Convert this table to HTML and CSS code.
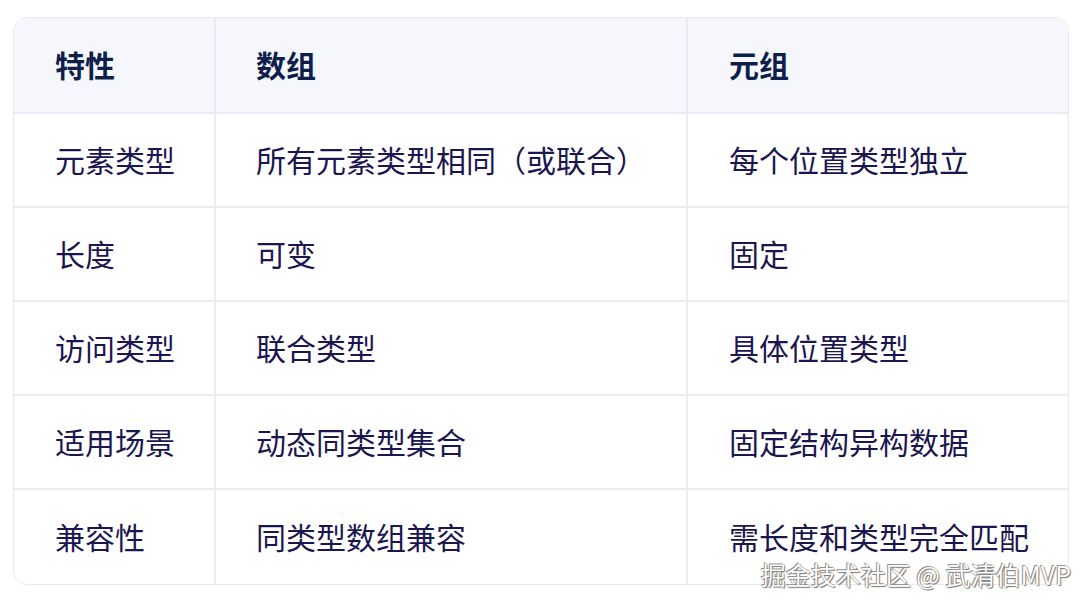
FILE: index.html
```html
<!DOCTYPE html>
<html lang="zh">
<head>
<meta charset="utf-8">
<link rel="stylesheet" href="styles.css">
</head>
<body>
<div class="wrap">
  <div class="table">
    <div class="cell head">特性</div>
    <div class="cell head">数组</div>
    <div class="cell head last">元组</div>

    <div class="cell">元素类型</div>
    <div class="cell">所有元素类型相同（或联合）</div>
    <div class="cell last">每个位置类型独立</div>

    <div class="cell">长度</div>
    <div class="cell">可变</div>
    <div class="cell last">固定</div>

    <div class="cell">访问类型</div>
    <div class="cell">联合类型</div>
    <div class="cell last">具体位置类型</div>

    <div class="cell">适用场景</div>
    <div class="cell">动态同类型集合</div>
    <div class="cell last">固定结构异构数据</div>

    <div class="cell bottom">兼容性</div>
    <div class="cell bottom">同类型数组兼容</div>
    <div class="cell bottom last">需长度和类型完全匹配</div>
  </div>
  <div class="watermark">掘金技术社区 @ 武清伯MVP</div>
</div>
</body>
</html>
```

FILE: styles.css
```css
html, body {
  margin: 0;
  padding: 0;
  background: #ffffff;
}
body {
  font-family: "Noto Sans CJK SC", "Noto Sans", sans-serif;
}
.wrap {
  position: relative;
  width: 1090px;
  height: 602px;
  padding: 17px 0 0 13px;
  box-sizing: border-box;
}
.table {
  width: 1056px;
  height: 568px;
  box-sizing: border-box;
  border: 1px solid #e9e9ef;
  border-radius: 14px;
  overflow: hidden;
  display: grid;
  grid-template-columns: 202px 472px 1fr;
  grid-template-rows: 96px repeat(5, 1fr);
}
.cell {
  display: flex;
  align-items: center;
  padding-left: 41px;
  padding-bottom: 3px;
  font-size: 30px;
  color: #1b1650;
  border-right: 2px solid #ececf1;
  border-bottom: 2px solid #ececf1;
  box-sizing: border-box;
}
.cell.last {
  border-right: none;
}
.cell.bottom {
  border-bottom: none;
}
.head {
  background: #f5f7fd;
  font-weight: 700;
  color: #0e1f4c;
  border-right-color: #e8eaf2;
  border-bottom-color: #e8eaf2;
}
.cell:nth-child(3n+2) {
  padding-left: 40px;
}
.watermark {
  position: absolute;
  right: 19px;
  bottom: 13px;
  font-size: 25px;
  line-height: 1.2;
  color: #ffffff;
  text-shadow: 0 0 1px #6f6f6f, 1px 1px 1px #777777, -1px -1px 0 #9a9a9a;
  font-family: "Noto Sans CJK SC", "Liberation Sans", sans-serif;
}
```
